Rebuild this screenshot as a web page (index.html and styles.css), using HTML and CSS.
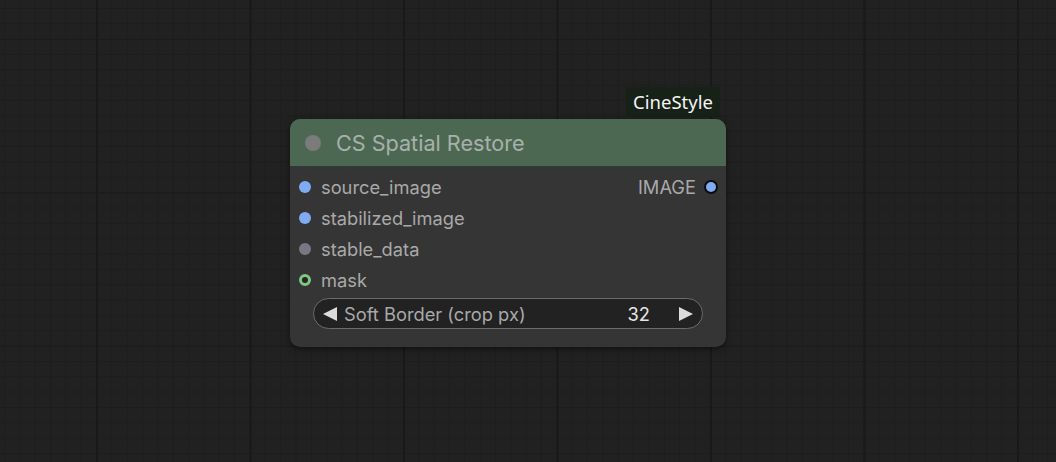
FILE: index.html
```html
<!DOCTYPE html>
<html>
<head>
	<meta charset="utf8">
	<title>Node canvas</title>
	<link rel="stylesheet" href="styles.css">
</head>
<body>
	<div class="canvas">
		<div class="badge">CineStyle</div>

		<div class="node">
			<div class="node-title">
				<span class="title-dot"></span>
				<span class="title-text">CS Spatial Restore</span>
			</div>
			<div class="node-body">
				<div class="slot-row">
					<div class="slot"><span class="dot dot-image"></span>source_image</div>
					<div class="slot slot-out">IMAGE<span class="dot dot-image dot-out"></span></div>
				</div>
				<div class="slot-row">
					<div class="slot"><span class="dot dot-image"></span>stabilized_image</div>
				</div>
				<div class="slot-row">
					<div class="slot"><span class="dot dot-data"></span>stable_data</div>
				</div>
				<div class="slot-row">
					<div class="slot"><span class="dot dot-mask"></span>mask</div>
				</div>
				<div class="widget">
					<span class="arrow arrow-left"></span>
					<span class="widget-label">Soft Border (crop px)</span>
					<span class="widget-value">32</span>
					<span class="arrow arrow-right"></span>
				</div>
			</div>
		</div>
	</div>
</body>
</html>
```
FILE: styles.css
```css
html, body {
	margin: 0;
	padding: 0;
	background: #1f1f1f;
}

/* the graph canvas, with the faint grid behind the node */
.canvas {
	position: relative;
	width: 1056px;
	height: 462px;
	overflow: hidden;
	background-color: #212121;
	background-image:
		linear-gradient(to right, #191919 0, #191919 2px, transparent 2px),
		linear-gradient(to bottom, #1b1b1b 0, #1b1b1b 1px, transparent 1px),
		linear-gradient(to right, #1d1d1d 0, #1d1d1d 1px, transparent 1px),
		linear-gradient(to bottom, #1d1d1d 0, #1d1d1d 1px, transparent 1px);
	background-size: 153.5px 153.5px, 153.5px 153.5px, 15.35px 15.35px, 15.35px 15.35px;
	background-position: 96px 0, 0 39px, 4px 0, 0 8px;
	font-family: Inter, "Liberation Sans", sans-serif;
}

.badge {
	position: absolute;
	left: 626px;
	top: 87px;
	width: 94px;
	height: 30px;
	background: #172117;
	color: #f4f4f4;
	font-family: "Noto Sans", sans-serif;
	font-size: 18.5px;
	line-height: 30px;
	text-align: center;
}

.node {
	position: absolute;
	left: 290px;
	top: 119px;
	width: 436px;
	height: 228px;
	background: #353535;
	border-radius: 10px;
	overflow: hidden;
	box-shadow: 0 2px 6px rgba(0, 0, 0, 0.5);
}

.node-title {
	display: flex;
	align-items: center;
	height: 47px;
	background: #4c6852;
	box-shadow: 0 1px 0 #2e3b31;
	padding-left: 15px;
}
.title-dot {
	width: 16px;
	height: 16px;
	border-radius: 50%;
	background: #7b7b7b;
}
.title-text {
	margin-left: 15px;
	color: #a8b1a9;
	font-size: 21.6px;
}

.node-body {
	padding: 5px 0 0 0;
}
.slot-row {
	display: flex;
	justify-content: space-between;
	align-items: center;
	height: 31px;
}
.slot {
	display: flex;
	align-items: center;
	color: #a9a9a9;
	font-size: 18.3px;
	padding-left: 9px;
}
.slot .dot {
	margin-right: 10px;
}
.slot-out {
	padding-left: 0;
	padding-right: 8px;
}
.slot-out .dot {
	margin-right: 0;
	margin-left: 8px;
}

.dot {
	display: inline-block;
	box-sizing: border-box;
	width: 12px;
	height: 12px;
	border-radius: 50%;
}
.dot-image {
	background: #7fabf2;
}
.dot-out {
	width: 14px;
	height: 14px;
	border: 2px solid #0c0c0c;
}
.dot-data {
	background: #7a7682;
}
.dot-mask {
	background: #262626;
	border: 3.5px solid #81c784;
}

.widget {
	display: flex;
	align-items: center;
	box-sizing: border-box;
	height: 31px;
	margin: 3px 23px 0 23px;
	padding: 0 9px;
	background: #222222;
	border: 1px solid #6b6b6b;
	border-radius: 16px;
	font-size: 18.3px;
}
.widget-label {
	flex: 1;
	margin-left: 7px;
	color: #a9a9a9;
}
.widget-value {
	color: #e6e6e6;
	margin-right: 29px;
}
.arrow {
	width: 0;
	height: 0;
	border-top: 7.5px solid transparent;
	border-bottom: 7.5px solid transparent;
}
.arrow-left {
	border-right: 14px solid #dcdcdc;
}
.arrow-right {
	border-left: 14px solid #dcdcdc;
}
```
